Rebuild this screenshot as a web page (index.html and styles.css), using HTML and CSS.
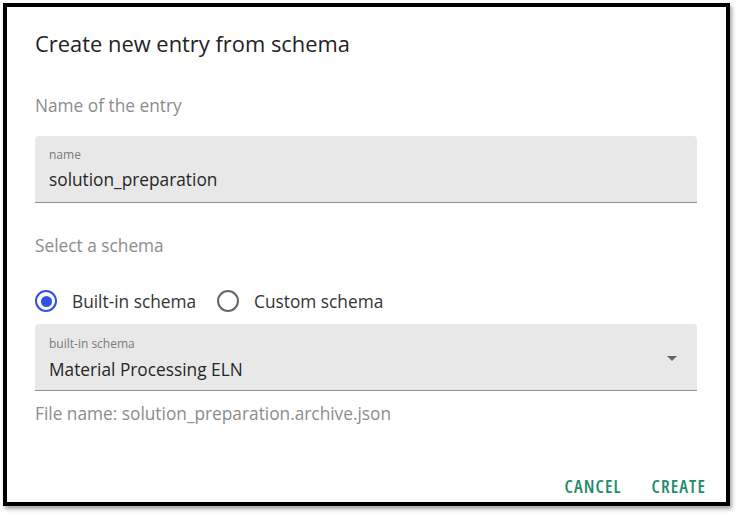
FILE: index.html
```html
<!DOCTYPE html>
<html>
<head>
<meta charset="utf-8">
<link rel="stylesheet" href="styles.css">
</head>
<body>
<div class="page">
  <div class="dialog">
    <h2 class="title">Create new entry from schema</h2>
    <div class="content">
      <p class="section-label">Name of the entry</p>
      <div class="field">
        <span class="field-label">name</span>
        <span class="field-value">solution_preparation</span>
      </div>
      <p class="section-label second">Select a schema</p>
      <div class="radios">
        <label class="radio">
          <span class="radio-circle checked"><span class="dot"></span></span>
          <span>Built-in schema</span>
        </label>
        <label class="radio">
          <span class="radio-circle"></span>
          <span>Custom schema</span>
        </label>
      </div>
      <div class="field select">
        <div class="select-text">
          <span class="field-label">built-in schema</span>
          <span class="field-value">Material Processing ELN</span>
        </div>
        <svg class="arrow" width="24" height="24" viewBox="0 0 24 24"><path d="M7 10l5 5 5-5z" fill="#666"/></svg>
      </div>
      <p class="filename">File name: solution_preparation.archive.json</p>
    </div>
    <div class="actions">
      <button class="btn">CANCEL</button>
      <button class="btn">CREATE</button>
    </div>
  </div>
</div>
</body>
</html>
```
FILE: styles.css
```css
* { box-sizing: border-box; }
html, body { margin: 0; padding: 0; background: #fff; }
body {
  font-family: "Open Sans", "Liberation Sans", sans-serif;
  color: #222;
}
.page { padding: 3px; width: 738px; height: 515px; }
.dialog {
  width: 727px;
  height: 503px;
  border: 4px solid #000;
  background: #fff;
  box-shadow: 2px 3px 4px rgba(0,0,0,0.35);
  display: flex;
  flex-direction: column;
  padding: 0 29px 0 28px;
}
.title {
  margin: 0;
  padding-top: 21px;
  font-size: 21.9px;
  font-weight: 400;
  line-height: 32px;
  color: #222;
}
.content { flex: 1; }
.section-label {
  margin: 0;
  padding-top: 34px;
  font-size: 17.3px;
  line-height: 24px;
  color: #8c8c8c;
}
.section-label.second { padding-top: 31px; }
.field {
  margin-top: 18px;
  background: #e8e8e8;
  border-radius: 4px 4px 0 0;
  border-bottom: 1px solid #8f8f8f;
  height: 67px;
  padding: 11px 14px 0;
  display: flex;
  flex-direction: column;
}
.field-label { font-size: 12px; line-height: 16px; color: #7a7a7a; }
.field-value { font-size: 17.3px; line-height: 24px; color: #262626; margin-top: 5px; }
.radios { display: flex; gap: 21px; margin-top: 25px; height: 36px; align-items: center; }
.radio { display: flex; align-items: center; gap: 15px; font-size: 17.3px; color: #333; }
.radio-circle {
  width: 22px; height: 22px; border-radius: 50%;
  border: 2px solid #666;
  display: flex; align-items: center; justify-content: center;
}
.radio-circle.checked { border-color: #2f52e0; }
.dot { width: 11px; height: 11px; border-radius: 50%; background: #2f52e0; }
.select { flex-direction: row; justify-content: space-between; margin-top: 5px; padding: 12px 13px 0 14px; }
.select .field-value { margin-top: 6px; }
.select-text { display: flex; flex-direction: column; }
.arrow { margin-top: 10px; }
.filename { margin: 0; padding-top: 11px; font-size: 17.3px; line-height: 24px; color: #8c8c8c; }
.actions { display: flex; justify-content: flex-end; gap: 30px; padding: 0 0 4px; margin-right: -9px; }
.btn {
  background: none; border: 0; padding: 0;
  font-family: inherit; font-size: 18px; line-height: 24px; font-weight: 600;
  font-stretch: 80%;
  letter-spacing: 1.1px;
  color: #1f8c6e;
}
```
